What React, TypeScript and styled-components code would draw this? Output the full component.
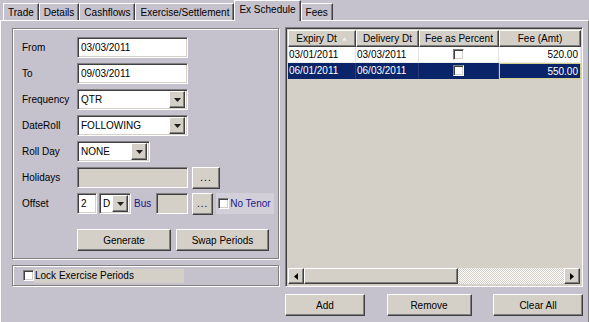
import React from 'react'
import styled, { createGlobalStyle, css } from 'styled-components'

const FACE = '#d4d0c8'
const LAVENDER = '#c5c1cd'
const NAVY = '#0a246a'
const LINK = '#1a1a8a'

const GlobalStyle = createGlobalStyle`
  html, body {
    margin: 0;
    padding: 0;
  }
  body {
    background: ${LAVENDER};
    font-family: 'Liberation Sans', Arial, sans-serif;
    font-size: 10px;
    color: #000;
  }
  *, *::before, *::after {
    box-sizing: border-box;
  }
`

const raised = css`
  border: 1px solid;
  border-color: #fff #404040 #404040 #fff;
  box-shadow: inset -1px -1px #808080;
  background: ${FACE};
`

const sunken = css`
  border: 1px solid;
  border-color: #808080 #fff #fff #808080;
  box-shadow: inset 1px 1px #404040, inset -1px -1px ${FACE};
`

const etched = css`
  border: 1px solid #808080;
  box-shadow: inset 1px 1px #fff, 1px 1px #fff;
`

const Window = styled.div`
  width: 589px;
  height: 322px;
  display: flex;
  flex-direction: column;
  overflow: hidden;
`

const TabStrip = styled.div`
  height: 20px;
  display: flex;
  align-items: flex-end;
  padding-left: 3px;
`

const Tab = styled.div<{ $active?: boolean }>`
  height: ${p => (p.$active ? '21px' : '17px')};
  margin-bottom: ${p => (p.$active ? '-1px' : '0')};
  padding: ${p => (p.$active ? '0 4px 3px' : '0 4px')};
  display: flex;
  align-items: center;
  white-space: nowrap;
  background: ${LAVENDER};
  border-top: 1px solid #fff;
  border-left: 1px solid #fff;
  border-right: 1px solid #404040;
  box-shadow: inset -1px 0 #808080;
  position: relative;
  z-index: ${p => (p.$active ? 2 : 1)};
`

const Page = styled.div`
  flex: 1;
  display: flex;
  gap: 6px;
  padding: 6px 5px 0 11px;
  border-top: 1px solid #fff;
  border-left: 1px solid #fff;
  border-right: 1px solid #808080;
`

const LeftColumn = styled.div`
  width: 267px;
  margin-top: 1px;
  display: flex;
  flex-direction: column;
  gap: 6px;
`

const GroupBox = styled.div`
  ${etched};
  height: 231px;
  padding: 8px 0 0 9px;
`

const FormGrid = styled.div`
  display: grid;
  grid-template-columns: 55px 1fr;
  grid-auto-rows: 21px;
  row-gap: 5px;
  align-items: center;
`

const Label = styled.span`
  white-space: nowrap;
`

const FieldRow = styled.div`
  display: flex;
  align-items: center;
  height: 21px;
`

const TextBox = styled.div<{ $w: number; $disabled?: boolean }>`
  ${sunken};
  width: ${p => p.$w}px;
  height: 21px;
  padding: 0 3px;
  display: flex;
  align-items: center;
  background: ${p => (p.$disabled ? FACE : '#fff')};
  white-space: nowrap;
  overflow: hidden;
`

const Combo = styled.div<{ $w: number }>`
  ${sunken};
  width: ${p => p.$w}px;
  height: 21px;
  padding: 2px 2px 2px 3px;
  display: flex;
  align-items: center;
  background: #fff;
`

const ComboText = styled.span`
  flex: 1;
  white-space: nowrap;
`

const DropButton = styled.div`
  ${raised};
  width: 16px;
  height: 17px;
  display: flex;
  align-items: center;
  justify-content: center;
`

const DotsButton = styled.div<{ $w: number }>`
  ${raised};
  width: ${p => p.$w}px;
  height: 22px;
  margin-left: 4px;
  display: flex;
  align-items: center;
  justify-content: center;
  letter-spacing: 1px;
`

const LinkLabel = styled.span`
  color: ${LINK};
  margin: 0 5px 0 3px;
`

const NoTenor = styled.label`
  margin-left: 3px;
  width: 58px;
  height: 21px;
  display: flex;
  align-items: center;
  gap: 1px;
  padding-left: 2px;
  background: #d3cfd9;
  color: ${LINK};
  white-space: nowrap;
`

const Check = styled.span<{ $size?: number }>`
  ${sunken};
  display: inline-block;
  flex: none;
  width: ${p => p.$size ?? 11}px;
  height: ${p => p.$size ?? 11}px;
  background: #fff;
`

const ActionRow = styled.div<{ $indent?: number }>`
  display: flex;
  gap: 5px;
  margin-top: 15px;
  padding-left: ${p => p.$indent ?? 0}px;
`

const Button = styled.div<{ $w: number }>`
  ${raised};
  width: ${p => p.$w}px;
  height: 22px;
  display: flex;
  align-items: center;
  justify-content: center;
  white-space: nowrap;
`

const LockBox = styled.div`
  ${etched};
  height: 21px;
  display: flex;
  align-items: center;
  padding-left: 10px;
`

const LockLabel = styled.span`
  width: 150px;
  height: 14px;
  display: flex;
  align-items: center;
  background: ${FACE};
  padding-left: 1px;
`

const RightColumn = styled.div`
  width: 298px;
  display: flex;
  flex-direction: column;
`

const Grid = styled.div`
  ${sunken};
  height: 260px;
  padding: 2px;
  display: flex;
  flex-direction: column;
  background: ${FACE};
`

const GridRow = styled.div`
  display: grid;
  grid-template-columns: 68px 63px 80px 82px;
`

const HeadCell = styled.div`
  ${raised};
  height: 17px;
  display: flex;
  align-items: center;
  justify-content: center;
  gap: 4px;
  white-space: nowrap;
`

const Cell = styled.div<{ $selected?: boolean; $align?: 'left' | 'center' | 'right'; $focus?: boolean }>`
  height: 16px;
  display: flex;
  align-items: center;
  justify-content: ${p => (p.$align === 'right' ? 'flex-end' : p.$align === 'center' ? 'center' : 'flex-start')};
  padding: 0 2px 0 1px;
  background: ${p => (p.$selected ? NAVY : '#fff')};
  color: ${p => (p.$selected ? '#fff' : '#000')};
  border-right: 1px solid ${p => (p.$selected ? '#2a3c78' : '#e4e4e4')};
  border-bottom: 1px solid ${p => (p.$selected ? NAVY : '#ececec')};
  ${p =>
    p.$focus &&
    css`
      border: 1px solid #d0d088;
    `}
`

const GridFill = styled.div`
  flex: 1;
`

const ScrollBar = styled.div`
  height: 16px;
  display: flex;
`

const ScrollArrow = styled.div`
  ${raised};
  width: 16px;
  height: 16px;
  display: flex;
  align-items: center;
  justify-content: center;
`

const ScrollThumb = styled.div`
  ${raised};
  width: 154px;
  height: 16px;
`

const ScrollTrack = styled.div`
  flex: 1;
  background: repeating-conic-gradient(#fff 0 25%, ${FACE} 0 50%) 0 0 / 2px 2px;
`

const BottomButtons = styled.div`
  margin-top: 7px;
  display: flex;
  justify-content: space-between;
`

const DownArrow = () => (
  <svg width="7" height="4" viewBox="0 0 7 4">
    <path d="M0 0h7L3.5 4z" fill="#202020" />
  </svg>
)

const SideArrow = ({ dir }: { dir: 'left' | 'right' }) => (
  <svg width="4" height="7" viewBox="0 0 4 7">
    <path d={dir === 'left' ? 'M4 0v7L0 3.5z' : 'M0 0v7L4 3.5z'} fill="#000" />
  </svg>
)

const SortMark = () => (
  <svg width="7" height="5" viewBox="0 0 7 5">
    <path d="M0 5h7L3.5 0z" fill="#eeeeea" stroke="#b8b4ac" strokeWidth="0.5" />
  </svg>
)

const ComboBox = ({ value, width }: { value: string; width: number }) => (
  <Combo $w={width}>
    <ComboText>{value}</ComboText>
    <DropButton>
      <DownArrow />
    </DropButton>
  </Combo>
)

const tabs = ['Trade', 'Details', 'Cashflows', 'Exercise/Settlement', 'Ex Schedule', 'Fees']

const rows = [
  { expiry: '03/01/2011', delivery: '03/03/2011', fee: '520.00', selected: false },
  { expiry: '06/01/2011', delivery: '06/03/2011', fee: '550.00', selected: true }
]

export default function App() {
  return (
    <>
      <GlobalStyle />
      <Window>
        <TabStrip>
          {tabs.map(t => (
            <Tab key={t} $active={t === 'Ex Schedule'}>
              {t}
            </Tab>
          ))}
        </TabStrip>
        <Page>
          <LeftColumn>
            <GroupBox>
              <FormGrid>
                <Label>From</Label>
                <TextBox $w={111}>03/03/2011</TextBox>
                <Label>To</Label>
                <TextBox $w={111}>09/03/2011</TextBox>
                <Label>Frequency</Label>
                <ComboBox value="QTR" width={111} />
                <Label>DateRoll</Label>
                <ComboBox value="FOLLOWING" width={111} />
                <Label>Roll Day</Label>
                <ComboBox value="NONE" width={73} />
                <Label>Holidays</Label>
                <FieldRow>
                  <TextBox $w={111} $disabled />
                  <DotsButton $w={28}>...</DotsButton>
                </FieldRow>
                <Label>Offset</Label>
                <FieldRow>
                  <TextBox $w={20}>2</TextBox>
                  <div style={{ width: 2 }} />
                  <ComboBox value="D" width={32} />
                  <LinkLabel>Bus</LinkLabel>
                  <TextBox $w={32} $disabled />
                  <DotsButton $w={21}>...</DotsButton>
                  <NoTenor>
                    <Check />
                    No Tenor
                  </NoTenor>
                </FieldRow>
              </FormGrid>
              <ActionRow $indent={55}>
                <Button $w={94}>Generate</Button>
                <Button $w={93}>Swap Periods</Button>
              </ActionRow>
            </GroupBox>
            <LockBox>
              <Check />
              <LockLabel>Lock Exercise Periods</LockLabel>
            </LockBox>
          </LeftColumn>
          <RightColumn>
            <Grid>
              <GridRow>
                <HeadCell>
                  Expiry Dt
                  <SortMark />
                </HeadCell>
                <HeadCell>Delivery Dt</HeadCell>
                <HeadCell>Fee as Percent</HeadCell>
                <HeadCell>Fee (Amt)</HeadCell>
              </GridRow>
              {rows.map(r => (
                <GridRow key={r.expiry}>
                  <Cell $selected={r.selected}>{r.expiry}</Cell>
                  <Cell $selected={r.selected}>{r.delivery}</Cell>
                  <Cell $selected={r.selected} $align="center">
                    <Check />
                  </Cell>
                  <Cell $selected={r.selected} $align="right" $focus={r.selected}>
                    {r.fee}
                  </Cell>
                </GridRow>
              ))}
              <GridFill />
              <ScrollBar>
                <ScrollArrow>
                  <SideArrow dir="left" />
                </ScrollArrow>
                <ScrollThumb />
                <ScrollTrack />
                <ScrollArrow>
                  <SideArrow dir="right" />
                </ScrollArrow>
              </ScrollBar>
            </Grid>
            <BottomButtons>
              <Button $w={80}>Add</Button>
              <Button $w={85}>Remove</Button>
              <Button $w={90}>Clear All</Button>
            </BottomButtons>
          </RightColumn>
        </Page>
      </Window>
    </>
  )
}
